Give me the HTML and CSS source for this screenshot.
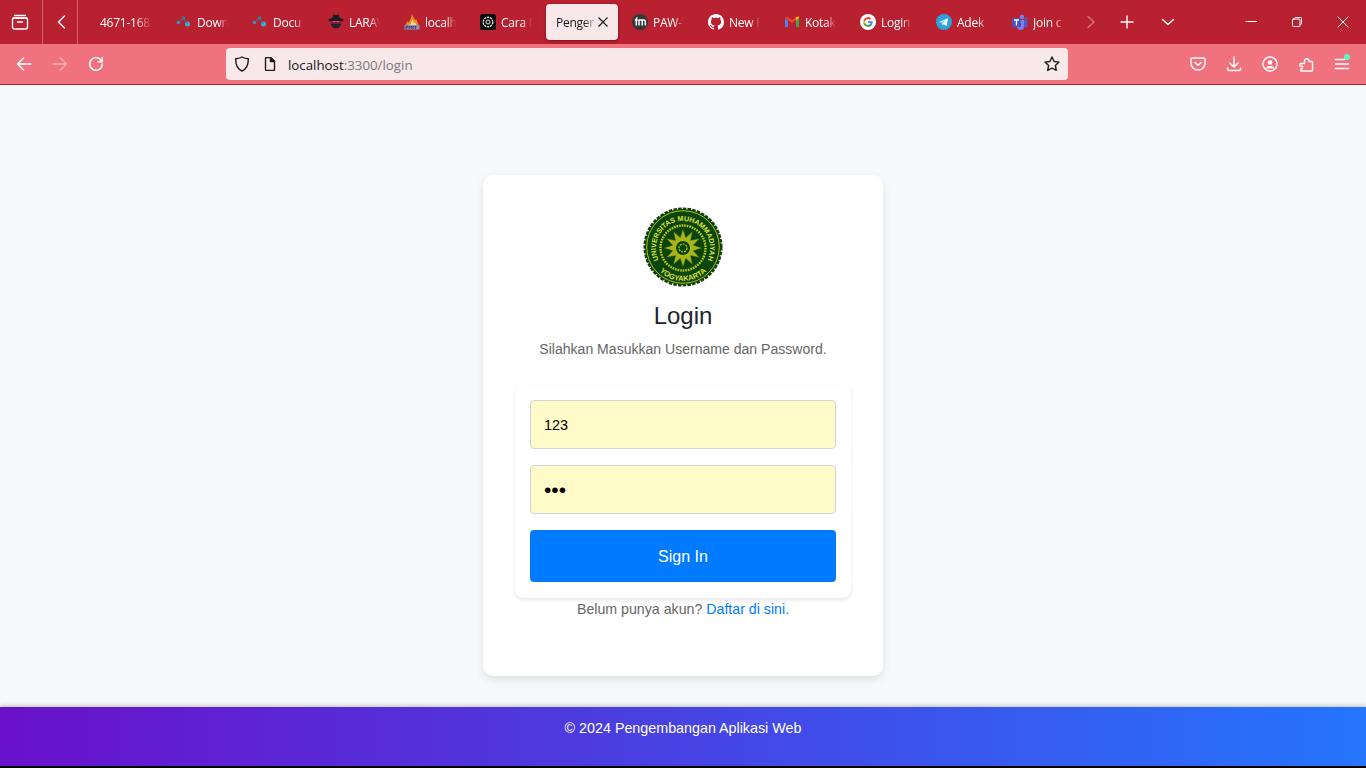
FILE: index.html
```html
<!DOCTYPE html>
<html lang="id">
<head>
<meta charset="utf-8">
<title>Pengembangan Aplikasi Web</title>
<link rel="stylesheet" href="styles.css">
</head>
<body>
<header class="browser">
  <div class="tabbar">
    <div class="strip-btn first">
      <svg width="18" height="18" viewBox="0 0 18 18" class="ic-w"><path d="M3.500 2.500h11M2 5h14"/><rect x="1.500" y="5" width="15" height="11" rx="2"/><path d="M6.500 9h5"/></svg>
    </div>
    <div class="strip-btn second">
      <svg width="16" height="16" viewBox="0 0 16 16" class="ic-w"><path d="M10.500 2 4.500 8l6 6"/></svg>
    </div>
    <div class="tabs">
      <div class="tab"><span class="label">4671-1683</span></div>
      <div class="tab">
        <svg class="fav" viewBox="0 0 16 16"><circle cx="2.500" cy="8.500" r="1.700" fill="#2a9fc0"/><circle cx="7.500" cy="4" r="1.700" fill="#2f7fa8"/><circle cx="11.500" cy="10" r="2.500" fill="#35b3d6"/><path d="M2.500 8.500l5-4.500 4 6" stroke="#2f7fa8" fill="none"/></svg>
        <span class="label">Down</span>
      </div>
      <div class="tab">
        <svg class="fav" viewBox="0 0 16 16"><circle cx="2.500" cy="8.500" r="1.700" fill="#2a9fc0"/><circle cx="7.500" cy="4" r="1.700" fill="#2f7fa8"/><circle cx="11.500" cy="10" r="2.500" fill="#35b3d6"/><path d="M2.500 8.500l5-4.500 4 6" stroke="#2f7fa8" fill="none"/></svg>
        <span class="label">Docu</span>
      </div>
      <div class="tab">
        <svg class="fav" viewBox="0 0 16 16"><path d="M4 5.500 5 .8h6l1 4.700z" fill="#1c1c28"/><ellipse cx="8" cy="6" rx="7.800" ry="2" fill="#1c1c28"/><path d="M2 7h12v2.500H2z" fill="#a01e2c"/><path d="M3 9.500h10a5 5 0 0 1-10 0z" fill="#23232f"/><path d="M5 7.500h2.300M8.800 7.500H11" stroke="#e4646e" stroke-width=".9"/></svg>
        <span class="label">LARAV</span>
      </div>
      <div class="tab">
        <svg class="fav" viewBox="0 0 16 16"><path d="M1 12l2.500-5 1.200 1.500L7 4l1-4 3 6 1.200-1L15 12z" fill="#ef8a1e"/><path d="M4 12l1.500-2 1 .8L8.300 5l1.700 4 1.200-.8L12.500 12z" fill="#f9d78a"/><rect x=".5" y="11" width="15" height="4.500" rx=".6" fill="#8d93b8"/><path d="M2 15v-3h1.700v1.500H2M5 15v-3l1.300 1.500L7.600 12v3M9 15v-3l1.300 1.500 1.300-1.500v3" stroke="#2c3a86" stroke-width=".8" fill="none"/></svg>
        <span class="label">localh</span>
      </div>
      <div class="tab">
        <svg class="fav" viewBox="0 0 16 16"><rect width="16" height="16" rx="2.500" fill="#0c0c0c"/><circle cx="8" cy="8" r="4.800" fill="none" stroke="#e8e8e8" stroke-width="1.300" stroke-dasharray="2.200 .8"/><circle cx="8" cy="8" r="2" fill="none" stroke="#e8e8e8"/></svg>
        <span class="label">Cara M</span>
      </div>
      <div class="tab active">
        <span class="label">Penger</span>
        <svg class="close" width="12" height="12" viewBox="0 0 12 12"><path d="M1.500 1.500l9 9M10.500 1.500l-9 9"/></svg>
      </div>
      <div class="tab">
        <svg class="fav" viewBox="0 0 16 16"><circle cx="8" cy="8" r="8" fill="#33373a"/><path d="M2.800 6h3M4.300 11.500V5a1.300 1.300 0 0 1 1.300-1.300M7 11.500V6h4.800a1.500 1.500 0 0 1 1.500 1.500v4M10.200 6v5.500" stroke="#fff" stroke-width="1.500" fill="none"/></svg>
        <span class="label">PAW-T</span>
      </div>
      <div class="tab">
        <svg class="fav" viewBox="0 0 16 16"><path fill="#fff" d="M8 0C3.580 0 0 3.580 0 8c0 3.540 2.290 6.530 5.470 7.590.4.070.55-.17.55-.38 0-.19-.01-.82-.01-1.490-2.010.37-2.530-.49-2.690-.94-.09-.23-.48-.94-.82-1.130-.28-.15-.68-.52-.01-.53.63-.01 1.080.58 1.230.82.72 1.210 1.870.87 2.330.66.07-.52.28-.87.51-1.070-1.780-.2-3.640-.89-3.640-3.950 0-.87.31-1.590.82-2.150-.08-.2-.36-1.020.08-2.120 0 0 .67-.21 2.200.82.64-.18 1.320-.27 2-.27s1.360.09 2 .27c1.530-1.040 2.200-.82 2.200-.82.44 1.100.16 1.920.08 2.120.51.56.82 1.270.82 2.150 0 3.070-1.870 3.750-3.650 3.950.29.25.54.73.54 1.480 0 1.070-.01 1.930-.01 2.200 0 .21.15.46.55.38A8.010 8.010 0 0 0 16 8c0-4.420-3.580-8-8-8z"/></svg>
        <span class="label">New R</span>
      </div>
      <div class="tab">
        <svg class="fav" viewBox="0 0 16 16"><path d="M1 4v9h3V7z" fill="#4285f4"/><path d="M12 7v6h3V4z" fill="#34a853"/><path d="M1 4l7 5 4-3V3L8 6 2.500 2.500z" fill="#ea4335"/><path d="M12 3v4l3-3V2.500z" fill="#fbbc04"/></svg>
        <span class="label">Kotak</span>
      </div>
      <div class="tab">
        <svg class="fav" viewBox="0 0 16 16"><circle cx="8" cy="8" r="8" fill="#fff"/><path d="M12.600 8.200c0-.4 0-.7-.1-1H8v1.900h2.600a2.200 2.200 0 0 1-1 1.500v1.200h1.600a4.800 4.800 0 0 0 1.400-3.600z" fill="#4285f4"/><path d="M8 13a4.700 4.700 0 0 0 3.200-1.200l-1.600-1.200a3 3 0 0 1-4.400-1.500H3.600v1.200A5 5 0 0 0 8 13z" fill="#34a853"/><path d="M5.200 9.100a3 3 0 0 1 0-1.900V6H3.600a5 5 0 0 0 0 4.400z" fill="#fbbc04"/><path d="M8 5a2.700 2.700 0 0 1 1.900.7l1.400-1.400A4.900 4.900 0 0 0 3.600 6l1.600 1.200A3 3 0 0 1 8 5z" fill="#ea4335"/></svg>
        <span class="label">Login</span>
      </div>
      <div class="tab">
        <svg class="fav" viewBox="0 0 16 16"><circle cx="8" cy="8" r="8" fill="#2aa3dd"/><path d="M3 8l9-3.700-1.400 7.900-2.800-2-1.300 1.300-.3-2.300 4-3.400-5 3z" fill="#fff"/></svg>
        <span class="label">Adek</span>
      </div>
      <div class="tab">
        <svg class="fav" viewBox="0 0 16 16"><circle cx="10" cy="3" r="2.200" fill="#7b83eb"/><circle cx="14" cy="4.500" r="1.500" fill="#5059c9"/><path d="M9 6h6.500v5a2.500 2.500 0 0 1-5 0z" fill="#5059c9"/><path d="M5 6h7v6.500a3.500 3.500 0 0 1-7 0z" fill="#7b83eb"/><rect x="0" y="4" width="9" height="9" rx="1" fill="#4b53bc"/><path d="M2 6h5M4.500 6v5.500" stroke="#fff" stroke-width="1.300"/></svg>
        <span class="label">Join c</span>
      </div>
    </div>
    <div class="strip-ctl scroll-next">
      <svg width="14" height="14" viewBox="0 0 14 14" class="ic-dim"><path d="M4 1.500l6 5.500-6 5.500"/></svg>
    </div>
    <div class="strip-ctl plus">
      <svg width="14" height="14" viewBox="0 0 14 14" class="ic-w"><path d="M7 1v12M1 7h12"/></svg>
    </div>
    <div class="strip-ctl more">
      <svg width="14" height="14" viewBox="0 0 14 14" class="ic-w"><path d="M1.500 4.500L7 9.500l5.500-5"/></svg>
    </div>
    <div class="window-ctls">
      <div class="win"><svg width="12" height="12" viewBox="0 0 12 12" class="ic-thin"><path d="M1 5.500h10.500"/></svg></div>
      <div class="win"><svg width="12" height="12" viewBox="0 0 12 12" class="ic-thin"><rect x="1.500" y="3" width="7.500" height="7.500" rx="1"/><path d="M3.500 3V2.500a1 1 0 0 1 1-1h5a1 1 0 0 1 1 1v5a1 1 0 0 1-1 1H9"/></svg></div>
      <div class="win"><svg width="12" height="12" viewBox="0 0 12 12" class="ic-thin"><path d="M1 1l10 10M11 1L1 11"/></svg></div>
    </div>
  </div>
  <div class="toolbar">
    <div class="tool"><svg width="16" height="16" viewBox="0 0 16 16" class="ic-w"><path d="M15 8H1.500M7.500 2l-6 6 6 6"/></svg></div>
    <div class="tool"><svg width="16" height="16" viewBox="0 0 16 16" class="ic-faint"><path d="M1 8h13.500M8.500 2l6 6-6 6"/></svg></div>
    <div class="tool"><svg width="16" height="16" viewBox="0 0 16 16" class="ic-w"><path d="M13.800 5.500A6.300 6.300 0 1 0 14.300 8"/><path d="M14.300 1.500v4.300H10"/></svg></div>
    <div class="address">
      <svg width="16" height="16" viewBox="0 0 16 16" class="ic-d"><path d="M8 1c2 1.200 4 1.700 6.300 1.800C14.500 9 12.500 13 8 15 3.500 13 1.500 9 1.700 2.800 4 2.700 6 2.200 8 1z"/></svg>
      <svg width="14" height="14" viewBox="0 0 14 14" class="ic-d doc"><path d="M2.500 1.500a1 1 0 0 1 1-1h4.300L11.500 4v8.500a1 1 0 0 1-1 1h-7a1 1 0 0 1-1-1z"/><path d="M7.500.5V4.500h4" class="solid-d"/></svg>
      <div class="url">localhost<span class="url-rest">:3300/login</span></div>
      <svg width="16" height="16" viewBox="0 0 16 16" class="ic-d"><path d="M8 1l2.100 4.500 4.900.6-3.600 3.400.9 4.900L8 12l-4.300 2.400.9-4.900L1 6.100l4.900-.6z"/></svg>
    </div>
    <div class="tool-right">
      <div class="tool"><svg width="16" height="16" viewBox="0 0 16 16" class="ic-w"><path d="M2.500 2h11A1.500 1.500 0 0 1 15 3.500V7A7 7 0 0 1 1 7V3.500A1.500 1.500 0 0 1 2.500 2z"/><path d="M5 6.500L8 9.300l3-2.800"/></svg></div>
      <div class="tool"><svg width="16" height="16" viewBox="0 0 16 16" class="ic-w"><path d="M8 1v10M3.800 7L8 11l4.200-4M1.500 12v1a1.500 1.500 0 0 0 1.500 1.500h10a1.500 1.500 0 0 0 1.500-1.500v-1"/></svg></div>
      <div class="tool"><svg width="16" height="16" viewBox="0 0 16 16" class="ic-w"><circle cx="8" cy="8" r="7"/><circle cx="8" cy="6.500" r="2.300" class="solid"/><path d="M3.500 12.500c1-2 2.500-2.500 4.500-2.500s3.500.5 4.500 2.500" class="solid"/></svg></div>
      <div class="tool"><svg width="16" height="16" viewBox="0 0 16 16" class="ic-w"><path d="M3.500 15h10a1 1 0 0 0 1-1V6.500a1 1 0 0 0-1-1H11a2.300 2.300 0 1 0-4.500 0v2H3a1 1 0 0 0-1 1V10h1a1.600 1.600 0 0 1 0 3.200H2.500V14a1 1 0 0 0 1 1z"/></svg></div>
      <div class="tool menu">
        <svg width="16" height="16" viewBox="0 0 16 16" class="ic-w"><path d="M1.500 3.500h9M1.500 8h13M1.500 12.500h13"/></svg>
        <span class="dot"></span>
      </div>
    </div>
  </div>
</header>

<main class="page">
  <section class="card">
    <svg class="logo" width="80" height="80" viewBox="0 0 80 80" role="img" aria-label="Logo Universitas Muhammadiyah Yogyakarta">
      <defs>
        <path id="arc-top" d="M17.900 56.500A27 27 0 1 1 62.100 56.500"/>
        <path id="arc-bot" d="M14.700 62.200A33 33 0 0 0 65.300 62.200"/>
      </defs>
      <circle cx="40" cy="40" r="38" class="logo-scallop"/>
      <circle cx="40" cy="40" r="38" class="logo-disc"/>
      <circle cx="40" cy="40" r="36.300" class="logo-ring"/>
      <text class="logo-text"><textPath href="#arc-top" startOffset="50%" text-anchor="middle">UNIVERSITAS MUHAMMADIYAH</textPath></text>
      <text class="logo-text logo-text-bot"><textPath href="#arc-bot" startOffset="50%" text-anchor="middle">YOGYAKARTA</textPath></text>
      <circle cx="40" cy="41" r="22.500" class="logo-beads"/>
      <polygon class="logo-sun" transform="translate(40 41) scale(1.200) translate(-40 -41)" points="40,25 42.330,32.310 48,27.140 46.360,34.640 53.860,33 48.690,38.670 56,41 48.690,43.330 53.860,49 46.360,47.360 48,54.860 42.330,49.690 40,57 37.670,49.690 32,54.860 33.640,47.360 26.140,49 31.310,43.330 24,41 31.310,38.670 26.140,33 33.640,34.640 32,27.140 37.670,32.310"/>
      <circle cx="40" cy="41" r="7.500" class="logo-core"/>
      <circle cx="40" cy="41" r="4" class="logo-core-in"/>
    </svg>
    <h1 class="title">Login</h1>
    <p class="subtitle">Silahkan Masukkan Username dan Password.</p>
    <form class="form-card">
      <input class="field" type="text" value="123" aria-label="Username">
      <input class="field field-pass" type="password" value="123" aria-label="Password">
      <button class="submit" type="button">Sign In</button>
    </form>
    <p class="signup">Belum punya akun? <a href="#">Daftar di sini.</a></p>
  </section>
</main>

<footer class="footer">© 2024 Pengembangan Aplikasi Web</footer>
</body>
</html>
```
FILE: styles.css
```css
* { box-sizing: border-box; }
html, body { margin: 0; height: 100%; }
body {
  width: 1366px;
  height: 768px;
  overflow: hidden;
  display: flex;
  flex-direction: column;
  background: #f8f9fa;
  font-family: "Liberation Sans", Arial, sans-serif;
}
svg { display: block; flex: none; }
.ic-w, .ic-d, .ic-faint, .ic-dim, .ic-thin { fill: none; stroke-linecap: round; stroke-linejoin: round; }
.ic-w { stroke: #fff; stroke-width: 1.400; }
.ic-w .solid { fill: #fff; stroke: none; }
.ic-d { stroke: #1c1b22; stroke-width: 1.400; }
.ic-d .solid-d { fill: #1c1b22; }
.ic-faint { stroke: rgba(255,255,255,.42); stroke-width: 1.400; }
.ic-dim { stroke: rgba(255,255,255,.4); stroke-width: 1.300; }
.ic-thin { stroke: #fff; stroke-width: 1; }

/* browser chrome */
.browser { flex: none; }
.tabbar {
  height: 44px;
  background: #b92030;
  display: flex;
  align-items: center;
}
.strip-btn {
  height: 44px;
  display: flex;
  align-items: center;
  justify-content: center;
  border-right: 1px solid rgba(255,255,255,.3);
}
.strip-btn.first { width: 43px; padding-right: 3px; }
.strip-btn.second { width: 35px; padding-left: 3px; }
.tabs {
  display: flex;
  gap: 4px;
  margin-left: 12px;
  width: 988px;
}
.tab {
  width: 72px;
  height: 36px;
  flex: none;
  display: flex;
  align-items: center;
  gap: 5px;
  padding: 0 10px;
  border-radius: 4px;
  color: #fff;
  font: 12px "Open Sans", "Noto Sans", sans-serif;
  letter-spacing: -.25px;
}
.tab.active {
  background: #f9e8e9;
  color: #15141a;
  box-shadow: 0 1px 3px rgba(0,0,0,.35);
  gap: 0;
  padding-right: 9px;
}
.fav { width: 16px; height: 16px; flex: none; }
.label {
  flex: 1;
  min-width: 0;
  padding-top: 1px;
  white-space: nowrap;
  overflow: hidden;
  -webkit-mask-image: linear-gradient(to right, #000 68%, transparent 100%);
  mask-image: linear-gradient(to right, #000 68%, transparent 100%);
}
.close { stroke: #15141a; stroke-width: 1.100; fill: none; }
.strip-ctl { height: 44px; display: flex; align-items: center; justify-content: center; }
.scroll-next { width: 26px; }
.plus { width: 46px; }
.more { width: 36px; }
.window-ctls { margin-left: auto; display: flex; }
.win { width: 46px; height: 44px; display: flex; align-items: center; justify-content: center; }

.toolbar {
  height: 41px;
  background: #f0727f;
  border-bottom: 1px solid #b92030;
  display: flex;
  align-items: center;
  padding: 0 6px 1px;
}
.tool { width: 36px; height: 32px; display: flex; align-items: center; justify-content: center; flex: none; }
.address {
  width: 842px;
  height: 32px;
  margin-left: 112px;
  background: #f9e8e9;
  border-radius: 4px;
  display: flex;
  align-items: center;
  padding: 0 8px;
}
.doc { margin-left: 13px; }
.url {
  margin-left: 11px;
  flex: 1;
  padding-top: 3px;
  color: #15141a;
  font: 13.300px "Open Sans", "Noto Sans", sans-serif;
}
.url-rest { color: #7b797e; }
.tool-right { margin-left: auto; display: flex; }
.menu { position: relative; }
.dot {
  position: absolute;
  top: 6px;
  right: 10px;
  width: 6px;
  height: 6px;
  border-radius: 50%;
  background: #54ffbd;
}

/* page */
.page {
  flex: 1;
  display: flex;
  justify-content: center;
  align-items: flex-start;
  padding-top: 90px;
}
.card {
  width: 400px;
  height: 501px;
  background: #fff;
  border-radius: 10px;
  box-shadow: 0 4px 10px rgba(0,0,0,.1);
  padding: 32px 32px 0;
  display: flex;
  flex-direction: column;
  align-items: center;
}
.logo { margin-bottom: 14px; }
.logo-scallop { fill: none; stroke: #123a0a; stroke-width: 3; stroke-dasharray: 3.500 1.200; }
.logo-disc { fill: #0a450c; }
.logo-ring { fill: none; stroke: #c8cf10; stroke-width: .9; }
.logo-text { font: bold 7.100px "Liberation Sans", Arial, sans-serif; fill: #dde23a; }
.logo-text-bot { font-size: 7.500px; }
.logo-beads { fill: none; stroke: #c8cf10; stroke-width: 2.400; stroke-dasharray: 1.600 1; }
.logo-sun { fill: #a9b41c; stroke: #0a450c; stroke-width: .4; }
.logo-core { fill: #0a450c; stroke: #c4cc18; stroke-width: .8; }
.logo-core-in { fill: none; stroke: #c4cc18; stroke-width: 1.200; stroke-dasharray: 2 1; }
.title {
  margin: 0;
  font-size: 24px;
  font-weight: 400;
  line-height: 29px;
  color: #212529;
}
.subtitle {
  margin: 11px 0 0;
  font-size: 14.050px;
  line-height: 17px;
  color: #666;
}
.form-card {
  width: 336px;
  height: 213px;
  margin-top: 27px;
  background: #fff;
  border-radius: 8px;
  box-shadow: 0 2px 4px rgba(0,0,0,.1);
  padding: 15px;
  display: flex;
  flex-direction: column;
  gap: 16px;
}
.field {
  width: 100%;
  height: 49px;
  flex: none;
  padding: 0 13px;
  background: #fffbc8;
  border: 1px solid #ced4da;
  border-radius: 4px;
  font: 14.400px "Liberation Sans", Arial, sans-serif;
  color: #000;
  outline: none;
}
.field-pass { font-size: 21px; }
.submit {
  height: 52px;
  flex: none;
  padding: 1px 0 0;
  background: #007bff;
  border: 0;
  border-radius: 4px;
  color: #fff;
  font: 16px "Liberation Sans", Arial, sans-serif;
}
.signup {
  margin: 3px 0 0;
  font-size: 14.200px;
  line-height: 17px;
  color: #666;
}
.signup a { color: #007bff; text-decoration: none; }

/* footer */
.footer {
  flex: none;
  height: 61px;
  padding-top: 13px;
  background: linear-gradient(to right, #6a11cb, #2575fc);
  border-bottom: 2px solid #000;
  box-shadow: 0 -2px 4px rgba(0,0,0,.18);
  color: #fff;
  font-size: 14.300px;
  line-height: 17px;
  text-align: center;
}
```
